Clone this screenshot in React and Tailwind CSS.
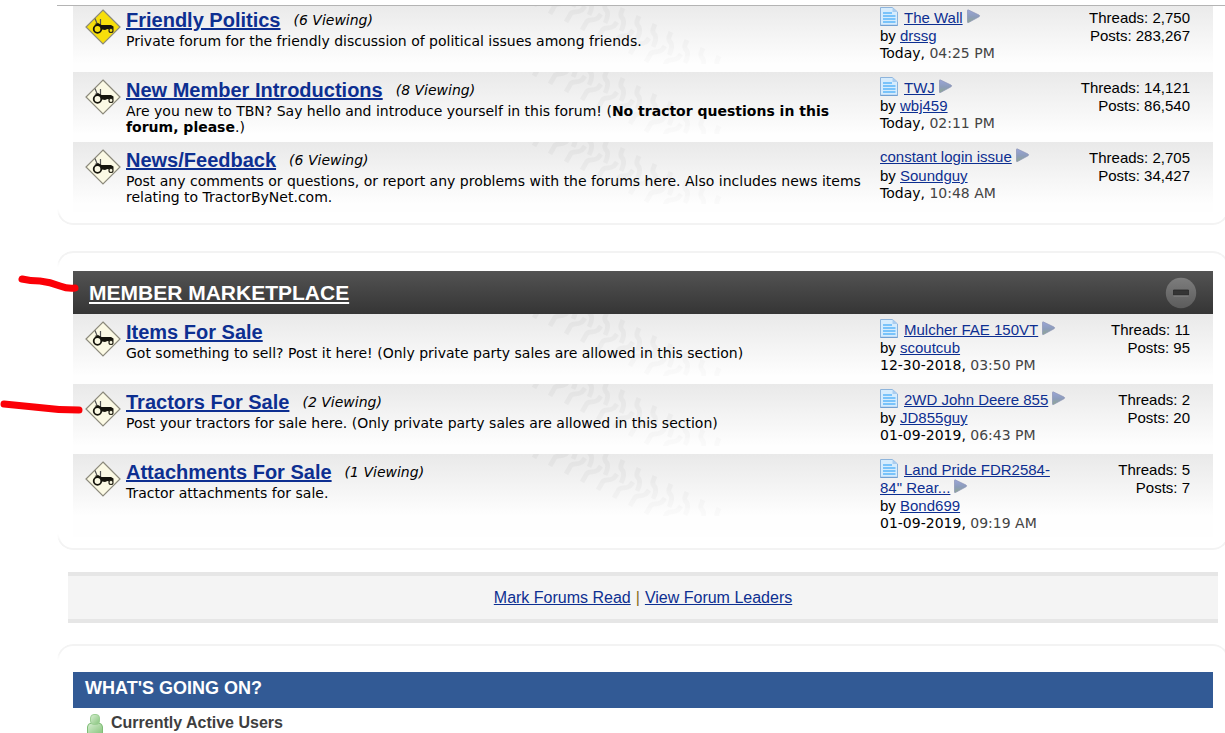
const politics = [
  {
    title: 'Friendly Politics',
    viewing: 6,
    isNew: true,
    text: 'Private forum for the friendly discussion of political issues among friends.',
    post: 'The Wall',
    doc: true,
    by: 'drssg',
    date: 'Today',
    time: '04:25 PM',
    threads: '2,750',
    posts: '283,267',
  },
  {
    title: 'New Member Introductions',
    viewing: 8,
    text: (
      <>
        Are you new to TBN? Say hello and introduce yourself in this forum! (
        <b>No tractor questions in this forum, please</b>.)
      </>
    ),
    post: 'TWJ',
    doc: true,
    by: 'wbj459',
    date: 'Today',
    time: '02:11 PM',
    threads: '14,121',
    posts: '86,540',
  },
  {
    title: 'News/Feedback',
    viewing: 6,
    text: 'Post any comments or questions, or report any problems with the forums here. Also includes news items relating to TractorByNet.com.',
    post: 'constant login issue',
    by: 'Soundguy',
    date: 'Today',
    time: '10:48 AM',
    threads: '2,705',
    posts: '34,427',
  },
];

const market = [
  {
    title: 'Items For Sale',
    text: 'Got something to sell? Post it here! (Only private party sales are allowed in this section)',
    post: 'Mulcher FAE 150VT',
    doc: true,
    by: 'scoutcub',
    date: '12-30-2018',
    time: '03:50 PM',
    threads: '11',
    posts: '95',
  },
  {
    title: 'Tractors For Sale',
    viewing: 2,
    text: 'Post your tractors for sale here. (Only private party sales are allowed in this section)',
    post: '2WD John Deere 855',
    doc: true,
    by: 'JD855guy',
    date: '01-09-2019',
    time: '06:43 PM',
    threads: '2',
    posts: '20',
  },
  {
    title: 'Attachments For Sale',
    viewing: 1,
    text: 'Tractor attachments for sale.',
    post: 'Land Pride FDR2584-84" Rear...',
    doc: true,
    by: 'Bond699',
    date: '01-09-2019',
    time: '09:19 AM',
    threads: '5',
    posts: '7',
  },
];

const link = 'text-[#0d2f91] underline';

function TractorSign({ fill }) {
  return (
    <svg viewBox="0 0 36 36" className="mt-[2px] size-9 shrink-0" aria-hidden="true">
      <path d="M18 1 35 18 18 35 1 18Z" fill={fill} stroke="#8c8a7c" strokeWidth="1.2" />
      <path d="M10 9.500 12 14.500M15.500 10v6" stroke="#555" strokeWidth="1.200" fill="none" />
      <path d="M9.500 15 13 14 16.500 16H26L28.500 17.500V20.500H24L22.500 20 20 21 17 20.500 14 17Z" fill="#15140c" />
      <circle cx="12.500" cy="20" r="3.800" fill={fill} stroke="#15140c" strokeWidth="1.800" />
      <circle cx="26" cy="21.500" r="2" fill={fill} stroke="#2a281c" strokeWidth="1.200" />
    </svg>
  );
}

function DocIcon() {
  return (
    <svg viewBox="0 0 18 19" className="mr-[6px] inline-block h-[19px] w-[18px] align-text-bottom" aria-hidden="true">
      <path d="M.5.5H12.5L17.5 5V18.5H.5Z" fill="#d6ecfd" stroke="#8db4dc" />
      <path d="M12.5.5V5H17.5Z" fill="#a9cdf0" />
      <path d="M3 6H12M3 9H15.5M3 12H15.5M3 15H15.5" stroke="#79c3fa" strokeWidth="2" />
      <path d="M.5 18.3H17.5" stroke="#6b9bd0" />
    </svg>
  );
}

function ArrowIcon() {
  return (
    <svg viewBox="0 0 14 15" className="ml-1 inline-block h-[15px] w-[14px] align-[-1px]" aria-hidden="true">
      <defs>
        <linearGradient id="arrow" x1="0" y1="0" x2="0" y2="1">
          <stop offset="0" stopColor="#9aa5d8" />
          <stop offset=".55" stopColor="#8c9cba" />
          <stop offset="1" stopColor="#90a890" />
        </linearGradient>
      </defs>
      <path d="M.5 1.500Q.5.500 1.500 1L12 6Q13.500 7 12 7.800L1.500 13.500Q.5 14 .5 13Z" fill="url(#arrow)" stroke="#8a92b4" strokeWidth=".7" />
    </svg>
  );
}

function Tracks() {
  return (
    <svg
      viewBox="0 0 220 62"
      className="absolute left-[447px] top-0 h-[62px] w-[220px] [mask-image:linear-gradient(#000_40%,rgb(0_0_0/.45))]"
      aria-hidden="true"
    >
      <g fill="none" stroke="#000" strokeOpacity=".03" strokeWidth="5" strokeLinejoin="round">
        {[-4, -3, -2, -1, 0, 1, 2, 3, 4, 5].map((k) => (
          <path key={k} transform={`translate(${k * 16} ${k * 8})`} d="M119 14 117 19Q116 22 119 25 121 29 117 37" />
        ))}
        {[-6, -5, -4, -3, -2, -1, 0, 1, 2, 3].map((k) => (
          <path key={k} transform={`translate(${k * 16} ${k * 8})`} d="M113 28 110 32Q107 34 103 34 99 34 98 37L94 44" />
        ))}
      </g>
    </svg>
  );
}

function ForumTable({ label, rows }) {
  return (
    <table aria-label={label} className="w-full table-fixed border-collapse">
      <colgroup>
        <col />
        <col className="w-[189px]" />
        <col className="w-[144px]" />
      </colgroup>
      <tbody>
        {rows.map((f) => (
          <tr key={f.title} className="relative h-[70px] bg-[linear-gradient(#e9e9e9,#fefefe_62px)] align-top">
            <td className="p-0">
              <Tracks />
              <div className="relative flex gap-[5px] pl-3 pr-2 pt-[5px]">
                <TractorSign fill={f.isNew ? '#f7df0c' : '#fbf9e4'} />
                <div className="font-['DejaVu_Sans',sans-serif] text-[14px] leading-4 text-black">
                  <h3 className="flex items-center gap-[13px] leading-[26px]">
                    <a href="#forum" className={`font-['Liberation_Sans',sans-serif] text-[20px] font-bold ${link}`}>
                      {f.title}
                    </a>
                    {f.viewing && <i>({f.viewing} Viewing)</i>}
                  </h3>
                  <p>{f.text}</p>
                </div>
              </div>
            </td>
            <td className="px-0 pb-[6px] pt-[5px] font-['Liberation_Sans',sans-serif] text-[15px] leading-[18px] text-black">
              <div className={f.doc ? '' : 'leading-5'}>
                {f.doc && <DocIcon />}
                <a href="#post" className={link}>{f.post}</a>
                <ArrowIcon />
              </div>
              <div>
                by <a href="#user" className={link}>{f.by}</a>
              </div>
              <div className="font-['DejaVu_Sans',sans-serif] text-[14px] leading-4">
                {f.date}, <span className="text-[#444]">{f.time}</span>
              </div>
            </td>
            <td className="py-0 pl-0 pr-[23px] pt-[7px] text-right font-['Liberation_Sans',sans-serif] text-[15px] leading-[18px] text-black">
              <div>Threads: {f.threads}</div>
              <div>Posts: {f.posts}</div>
            </td>
          </tr>
        ))}
      </tbody>
    </table>
  );
}

function CapTop() {
  return (
    <div className="h-4 rounded-t-[18px] border-2 border-b-0 border-[#f3f3f3] [mask-image:linear-gradient(#000_50%,transparent)]" />
  );
}

function CapBottom() {
  return (
    <div className="-mt-[3px] h-4 rounded-b-[18px] border-2 border-t-0 border-[#f3f3f3] [mask-image:linear-gradient(transparent,#000_50%)]" />
  );
}

function Scribble({ className, d }) {
  return (
    <svg viewBox="0 0 84 22" className={`absolute h-[22px] w-[84px] ${className}`} aria-hidden="true">
      <path d={d} fill="none" stroke="#fb0007" strokeWidth="7" strokeLinecap="round" strokeLinejoin="round" />
    </svg>
  );
}

export default function App() {
  return (
    <main className="relative h-screen overflow-hidden bg-white font-['Liberation_Sans',sans-serif]">
      <div className="-mr-1 ml-[57px]">
        <div className="relative z-10 h-[6px] border-b border-[#b4b4b4] bg-white" />
        <section className="-mt-1">
          <div className="px-4">
            <ForumTable label="Community forums" rows={politics} />
          </div>
          <CapBottom />
        </section>

        <section className="mt-[26px]">
          <CapTop />
          <div className="mt-1 px-4">
            <header className="flex h-[43px] items-center justify-between bg-linear-to-b from-[#535353] to-[#353535] px-4">
              <h2>
                <a href="#marketplace" className="text-[21px] font-bold text-white underline">
                  MEMBER MARKETPLACE
                </a>
              </h2>
              <button type="button" aria-label="Collapse" className="size-8">
                <svg viewBox="0 0 32 32" className="size-8" aria-hidden="true">
                  <defs>
                    <linearGradient id="knob" x1="0" y1="0" x2="0" y2="1">
                      <stop offset="0" stopColor="#7d7d7d" />
                      <stop offset="1" stopColor="#5c5c5c" />
                    </linearGradient>
                  </defs>
                  <circle cx="16" cy="16" r="15.2" fill="url(#knob)" />
                  <path d="M8.5 13h15v5h-15z" fill="#353535" stroke="#2a2a2a" strokeWidth=".8" />
                  <path d="M8.5 19h15" stroke="#858585" />
                </svg>
              </button>
            </header>
            <ForumTable label="Member Marketplace" rows={market} />
          </div>
          <CapBottom />
        </section>

        <nav className="ml-[11px] mr-[11px] mt-[22px] flex h-[51px] items-center justify-center gap-[5px] border-y-4 border-[#e6e6e6] bg-[#f4f4f4] text-[16px] text-[#8a6d1a]">
          <a href="#read" className={link}>Mark Forums Read</a>
          <span>|</span>
          <a href="#leaders" className={link}>View Forum Leaders</a>
        </nav>

        <section className="mt-[21px]">
          <CapTop />
          <div className="mt-3 px-4">
            <h2 className="h-9 bg-[#325a95] px-3 text-[18px] font-bold leading-[33px] text-white">WHAT'S GOING ON?</h2>
            <h3 className="flex items-start gap-[7px] pl-[13px] pt-[5px] text-[16px] font-bold leading-5 text-[#3e3e3e]">
              <svg viewBox="0 0 18 22" className="h-[22px] w-[18px]" aria-hidden="true">
                <defs>
                  <linearGradient id="user" x1="0" y1="0" x2="1" y2="1">
                    <stop offset="0" stopColor="#d9efd3" />
                    <stop offset="1" stopColor="#86c47c" />
                  </linearGradient>
                </defs>
                <path d="M1.5 21V14Q1.500 10.500 5.500 10H12.500Q16.500 10.500 16.500 14V21Z" fill="url(#user)" stroke="#7fbd76" />
                <rect x="4.500" y="1.500" width="9" height="10" rx="3.500" fill="url(#user)" stroke="#9ccf94" />
              </svg>
              Currently Active Users
            </h3>
          </div>
        </section>
      </div>
      <Scribble className="left-0 top-[272px]" d="M22 7Q30 9 40 9 50 10 60 14 68 17 75 16" />
      <Scribble className="left-0 top-[396px]" d="M4 8 34 11Q56 14 79 14" />
    </main>
  );
}
